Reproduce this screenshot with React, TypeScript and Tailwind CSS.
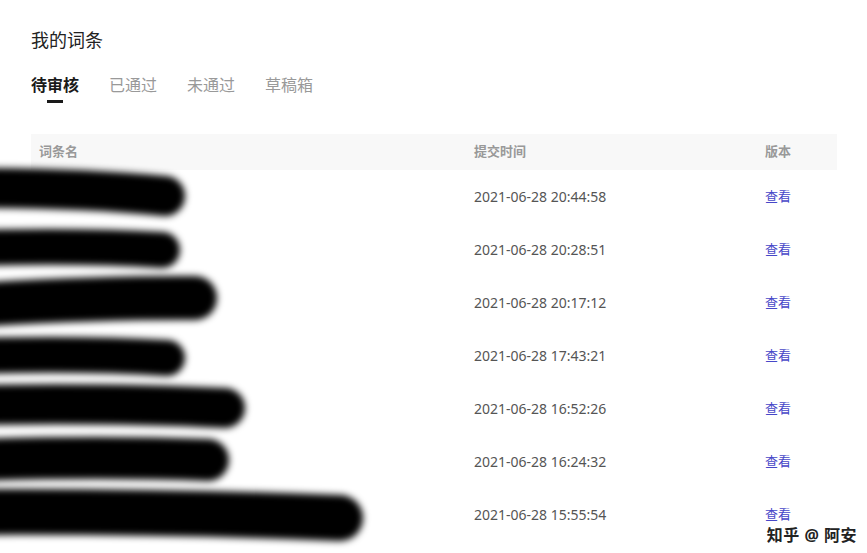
import React from 'react';

const rows = [
  '2021-06-28 20:44:58',
  '2021-06-28 20:28:51',
  '2021-06-28 20:17:12',
  '2021-06-28 17:43:21',
  '2021-06-28 16:52:26',
  '2021-06-28 16:24:32',
  '2021-06-28 15:55:54',
];

const tabs = ['待审核', '已通过', '未通过', '草稿箱'];

// redaction strokes drawn over the name column
const strokes = [
  { y1: 188, y2: 196, end: 165, w: 40 },
  { y1: 248, y2: 250, end: 162, w: 36 },
  { y1: 305, y2: 298, end: 195, w: 44 },
  { y1: 356, y2: 358, end: 167, w: 36 },
  { y1: 405, y2: 408, end: 225, w: 40 },
  { y1: 460, y2: 460, end: 208, w: 42 },
  { y1: 512, y2: 518, end: 340, w: 46 },
];

function Redaction() {
  return (
    <svg className="absolute left-0 top-0 pointer-events-none" width={400} height={553}>
      <defs>
        <filter id="blur" x="-20%" y="-50%" width="140%" height="200%">
          <feGaussianBlur stdDeviation="3.5" />
        </filter>
      </defs>
      <g filter="url(#blur)" stroke="#000" strokeLinecap="round" fill="none">
        {strokes.map((s, i) => (
          <path
            key={i}
            d={`M -30 ${s.y1} Q ${s.end / 2} ${(s.y1 + s.y2) / 2 - 4} ${s.end} ${s.y2}`}
            strokeWidth={s.w}
          />
        ))}
      </g>
    </svg>
  );
}

export default function App() {
  return (
    <div
      className="relative w-[867px] h-[553px] overflow-hidden bg-white"
      style={{ fontFamily: '"Noto Sans", "Noto Sans CJK SC", sans-serif' }}
    >
      <div className="pl-[31px] pr-[30px] pt-[27px]">
        <h1 className="text-[18px] leading-[26px] text-[#222] font-normal">我的词条</h1>

        <div className="flex gap-[30px] mt-[21px]">
          {tabs.map((t, i) => (
            <div key={t} className="flex flex-col items-center">
              <span
                className={`text-[16px] leading-[22px] ${
                  i === 0 ? 'font-bold text-[#1a1a1a]' : 'text-[#999]'
                }`}
              >
                {t}
              </span>
              <span className={`mt-[4px] h-[3px] w-[16px] ${i === 0 ? 'bg-[#1a1a1a]' : 'bg-transparent'}`} />
            </div>
          ))}
        </div>

        <div className="mt-[31px]">
          <div className="flex items-center h-[36px] bg-[#f8f8f8] text-[13px] font-bold text-[#999]">
            <span className="pl-[8px] w-[443px]">词条名</span>
            <span className="w-[291px]">提交时间</span>
            <span>版本</span>
          </div>
          {rows.map((d) => (
            <div key={d} className="flex items-center h-[53px] text-[14px]">
              <span className="pl-[8px] w-[443px]" />
              <span className="w-[291px] text-[#555]">{d}</span>
              <span className="text-[13px] text-[#4747c8]">查看</span>
            </div>
          ))}
        </div>
      </div>

      <Redaction />

      <div className="absolute right-[10px] bottom-[6px] text-[16px] font-bold text-[#222] tracking-[0.5px]">
        知乎 @ 阿安
      </div>
    </div>
  );
}
